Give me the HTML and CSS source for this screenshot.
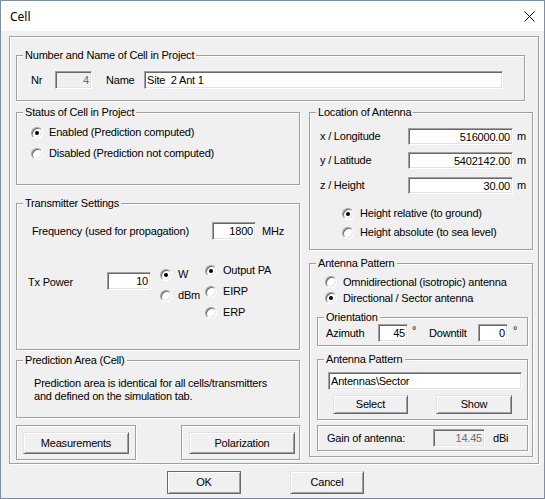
FILE: index.html
```html
<!DOCTYPE html>
<html>
<head>
<meta charset="utf-8">
<title>Cell</title>
<link rel="stylesheet" href="styles.css">
</head>
<body>
<div class="window">
  <div class="titlebar">
    <span class="title">Cell</span>
    <svg class="close" width="11" height="11" viewBox="0 0 11 11"><path d="M0.5 0.5 L10.5 10.5 M10.5 0.5 L0.5 10.5" stroke="#000" stroke-width="1" fill="none"/></svg>
  </div>
  <div class="client">
    <div class="frame group">
      <div class="group g-number">
        <div class="group-title">Number and Name of Cell in Project</div>
        <div class="nr-row">
          <span class="lbl-nr">Nr</span>
          <input class="field num disabled nr-field" value="4" readonly>
          <span class="lbl-name">Name</span>
          <input class="field name-field" value="Site  2 Ant 1">
        </div>
      </div>
      <div class="columns">
        <div class="col-left">
          <div class="group g-status">
            <div class="group-title">Status of Cell in Project</div>
            <div class="status-rows">
              <div class="radio-row status-row"><span class="radio on"></span><span class="radio-label">Enabled (Prediction computed)</span></div>
              <div class="radio-row status-row"><span class="radio"></span><span class="radio-label">Disabled (Prediction not computed)</span></div>
            </div>
          </div>
          <div class="group g-tx">
            <div class="group-title">Transmitter Settings</div>
            <div class="freq-row">
              <span class="freq-label">Frequency (used for propagation)</span>
              <input class="field num freq-field" value="1800">
              <span class="unit-mhz">MHz</span>
            </div>
            <div class="tx-row">
              <span class="tx-label">Tx Power</span>
              <input class="field num tx-field" value="10">
              <div class="unit-col">
                <div class="radio-row tx-radio"><span class="radio on"></span><span class="radio-label">W</span></div>
                <div class="radio-row tx-radio"><span class="radio"></span><span class="radio-label">dBm</span></div>
              </div>
              <div class="target-col">
                <div class="radio-row tx-radio"><span class="radio on"></span><span class="radio-label">Output PA</span></div>
                <div class="radio-row tx-radio"><span class="radio"></span><span class="radio-label">EIRP</span></div>
                <div class="radio-row tx-radio"><span class="radio"></span><span class="radio-label">ERP</span></div>
              </div>
            </div>
          </div>
          <div class="group g-pred">
            <div class="group-title">Prediction Area (Cell)</div>
            <p class="pred-text">Prediction area is identical for all cells/transmitters<br>and defined on the simulation tab.</p>
          </div>
          <div class="btn-row">
            <div class="group g-btn g-meas"><button class="btn meas-btn">Measurements</button></div>
            <div class="group g-btn g-pol"><button class="btn meas-btn">Polarization</button></div>
          </div>
        </div>
        <div class="col-right">
          <div class="group g-loc">
            <div class="group-title">Location of Antenna</div>
            <div class="loc-row loc-row1"><span class="loc-label">x / Longitude</span><input class="field num loc-field" value="516000.00"><span class="unit-m">m</span></div>
            <div class="loc-row loc-row2"><span class="loc-label">y / Latitude</span><input class="field num loc-field" value="5402142.00"><span class="unit-m">m</span></div>
            <div class="loc-row loc-row3"><span class="loc-label">z / Height</span><input class="field num loc-field" value="30.00"><span class="unit-m">m</span></div>
            <div class="loc-radios">
              <div class="radio-row loc-radio"><span class="radio on"></span><span class="radio-label">Height relative (to ground)</span></div>
              <div class="radio-row loc-radio"><span class="radio"></span><span class="radio-label">Height absolute (to sea level)</span></div>
            </div>
          </div>
          <div class="group g-ant">
            <div class="group-title">Antenna Pattern</div>
            <div class="ant-radios">
              <div class="radio-row ant-radio"><span class="radio"></span><span class="radio-label">Omnidirectional (isotropic) antenna</span></div>
              <div class="radio-row ant-radio"><span class="radio on"></span><span class="radio-label">Directional / Sector antenna</span></div>
            </div>
            <div class="group sub g-orient">
              <div class="group-title">Orientation</div>
              <div class="orient-row">
                <span class="az-label">Azimuth</span>
                <input class="field num small-field" value="45">
                <span class="deg deg1">°</span>
                <span class="dt-label">Downtilt</span>
                <input class="field num small-field" value="0">
                <span class="deg deg2">°</span>
              </div>
            </div>
            <div class="group sub g-pattern">
              <div class="group-title">Antenna Pattern</div>
              <input class="field pattern-field" value="Antennas\Sector">
              <div class="pattern-btns">
                <button class="btn select-btn">Select</button>
                <button class="btn show-btn">Show</button>
              </div>
            </div>
            <div class="group sub g-gain">
              <div class="gain-row">
                <span class="gain-label">Gain of antenna:</span>
                <input class="field num disabled gain-field" value="14.45" readonly>
                <span class="unit-dbi">dBi</span>
              </div>
            </div>
          </div>
        </div>
      </div>
    </div>
    <div class="dlg-buttons">
      <button class="btn ok-btn">OK</button>
      <button class="btn cancel-btn">Cancel</button>
    </div>
  </div>
</div>
</body>
</html>
```

FILE: styles.css
```css
html, body {
  margin: 0;
  padding: 0;
  background: #f0f0f0;
}
body {
  font-family: "Liberation Sans", Arial, sans-serif;
  font-size: 11px;
  letter-spacing: -0.2px;
  color: #000;
  line-height: 13px;
}
.window {
  width: 545px;
  height: 499px;
  box-sizing: border-box;
  border: 1px solid #7f8ea5;
  background: #f0f0f0;
  display: flex;
  flex-direction: column;
}
.titlebar {
  height: 30px;
  flex: none;
  background: #fff;
  display: flex;
  align-items: center;
}
.title {
  font-family: "Noto Sans", "Open Sans", sans-serif;
  font-size: 12px;
  letter-spacing: 0;
  margin-left: 9px;
}
.close {
  margin-left: auto;
  margin-right: 9px;
}
.client {
  flex: 1;
  padding: 5px 0 0 8px;
}

/* etched group boxes */
.group {
  box-sizing: border-box;
  border: 1px solid #a0a0a0;
  box-shadow: inset 1px 1px 0 #fff, 1px 1px 0 #fff;
}
.group-title {
  width: max-content;
  margin: -7px 0 0 6px;
  padding: 0 2px;
  background: #f0f0f0;
  line-height: 13px;
}
.frame {
  width: 530px;
  height: 428px;
  padding: 18px 0 0 6px;
}
.g-number {
  width: 509px;
  height: 46px;
}
.nr-row {
  display: flex;
  align-items: center;
  height: 18px;
  margin-top: 9px;
  padding-left: 14px;
}
.lbl-nr { width: 24px; }
.nr-field { width: 37px; }
.lbl-name { width: 38px; margin-left: 14px; }
.name-field { width: 359px; }

/* inputs */
.field {
  box-sizing: border-box;
  height: 18px;
  margin: 0;
  padding: 0 2px;
  border: 1px solid;
  border-color: #a0a0a0 #fff #fff #a0a0a0;
  box-shadow: inset 1px 1px 0 #696969, inset -1px -1px 0 #e3e3e3;
  background: #fff;
  font: inherit;
  letter-spacing: inherit;
  color: #000;
  outline: none;
  flex: none;
}
.num { text-align: right; padding-right: 2px; }
.disabled { background: #f0f0f0; color: #6d6d6d; }

/* buttons */
.btn {
  box-sizing: border-box;
  margin: 0;
  padding: 0;
  font: inherit;
  letter-spacing: inherit;
  color: #000;
  background: #f0f0f0;
  border: 1px solid;
  border-color: #e3e3e3 #696969 #696969 #e3e3e3;
  box-shadow: inset 1px 1px 0 #fff, inset -1px -1px 0 #a0a0a0;
  flex: none;
}

/* radios */
.radio-row {
  display: flex;
  align-items: center;
}
.radio {
  box-sizing: border-box;
  width: 12px;
  height: 12px;
  flex: none;
  border-radius: 50%;
  background: #fff;
  border: 1px solid;
  border-color: #a0a0a0 #fff #fff #a0a0a0;
  box-shadow: inset 1px 1px 0 #696969, inset -1px -1px 0 #e3e3e3;
}
.radio.on::after {
  content: "";
  display: block;
  width: 4px;
  height: 4px;
  margin: 3px;
  border-radius: 50%;
  background: #000;
}
.radio-label {
  margin-left: 6px;
  white-space: nowrap;
}

.columns {
  display: flex;
  margin-top: 11px;
}
.col-left { width: 284px; flex: none; }
.col-right { width: 224px; flex: none; margin-left: 9px; }

/* status */
.g-status { height: 73px; }
.status-rows { margin-top: 3px; }
.status-row { height: 21px; padding-left: 14px; }

/* transmitter */
.g-tx { height: 147px; margin-top: 18px; }
.freq-row {
  display: flex;
  align-items: center;
  height: 18px;
  margin-top: 12px;
  padding-left: 15px;
}
.freq-label { width: 180px; }
.freq-field { width: 44px; }
.unit-mhz { margin-left: 6px; }
.tx-row {
  display: flex;
  align-items: flex-start;
  margin-top: 20px;
  padding-left: 11px;
}
.tx-label { width: 79px; margin-top: 16px; }
.tx-field { width: 44px; margin-top: 12px; }
.unit-col { width: 45px; margin-left: 9px; margin-top: 4px; }
.tx-radio { height: 21px; }

/* prediction */
.g-pred { height: 58px; margin-top: 10px; }
.pred-text {
  margin: 10px 0 0 0;
  padding-left: 17px;
  line-height: 13px;
}

/* bottom left buttons */
.btn-row {
  display: flex;
  margin-top: 7px;
  height: 35px;
}
.g-btn { height: 35px; padding-top: 6px; }
.g-meas { width: 120px; padding-left: 6px; }
.g-pol { width: 119px; margin-left: 45px; padding-left: 7px; }
.meas-btn { width: 106px; height: 22px; }

/* location */
.g-loc { height: 138px; }
.loc-row {
  display: flex;
  align-items: center;
  height: 17px;
  padding-left: 10px;
}
.loc-row1 { margin-top: 9px; }
.loc-row2 { margin-top: 7px; }
.loc-row3 { margin-top: 8px; }
.loc-label { width: 88px; }
.loc-field { width: 105px; height: 17px; }
.unit-m { margin-left: 4px; }
.loc-radios { margin-top: 10px; }
.loc-radio { height: 19px; padding-left: 32px; }

/* antenna */
.g-ant { height: 194px; margin-top: 13px; }
.ant-radios { margin-top: 4px; }
.ant-radio { height: 16px; padding-left: 15px; }
.sub { width: 211px; margin-left: 7px; }
.g-orient { height: 29px; margin-top: 11px; }
.orient-row {
  display: flex;
  align-items: center;
  height: 18px;
  padding-left: 8px;
}
.az-label { width: 52px; }
.small-field { width: 30px; }
.deg { align-self: flex-start; line-height: 13px; }
.deg1 { width: 17px; margin-left: 4px; }
.dt-label { width: 49px; }
.deg2 { margin-left: 5px; }
.g-pattern { height: 61px; margin-top: 13px; }
.pattern-field {
  display: block;
  width: 194px;
  margin: 6px 0 0 10px;
}
.pattern-btns {
  display: flex;
  margin-top: 5px;
}
.select-btn { width: 75px; height: 19px; margin-left: 15px; }
.show-btn { width: 76px; height: 19px; margin-left: 28px; }
.g-gain { height: 26px; margin-top: 5px; }
.gain-row {
  display: flex;
  align-items: center;
  height: 18px;
  margin-top: 3px;
  padding-left: 9px;
}
.gain-label { width: 106px; }
.gain-field { width: 52px; }
.unit-dbi { margin-left: 8px; }

/* dialog buttons */
.dlg-buttons {
  display: flex;
  margin-top: 7px;
  padding-left: 158px;
}
.ok-btn {
  width: 74px;
  height: 23px;
  border-color: #696969;
  box-shadow: inset 1px 1px 0 #fff, inset -1px -1px 0 #a0a0a0;
}
.cancel-btn { width: 74px; height: 23px; margin-left: 49px; }
```
